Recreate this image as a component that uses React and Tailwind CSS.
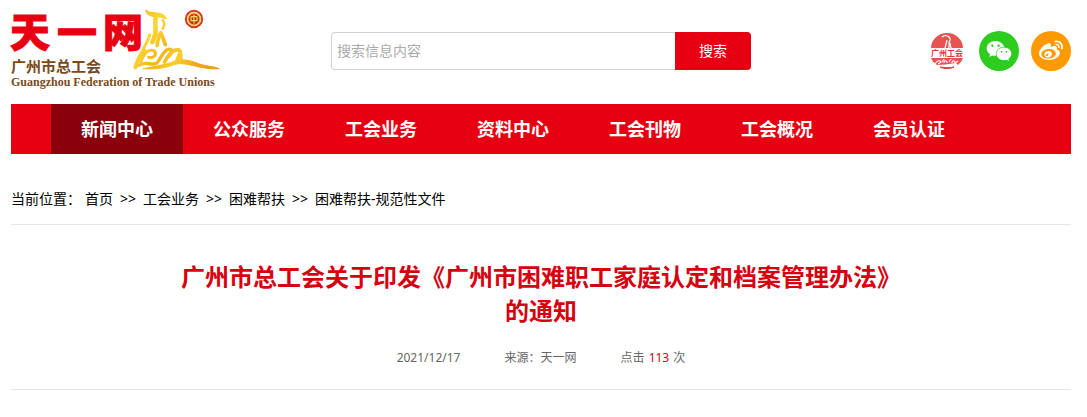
import React from 'react';
import { FaWeixin, FaWeibo } from 'react-icons/fa';

const navItems = ['新闻中心', '公众服务', '工会业务', '资料中心', '工会刊物', '工会概况', '会员认证'];

const crumbs = ['首页', '工会业务', '困难帮扶', '困难帮扶-规范性文件'];

const Logo = () => (
  <svg className="shrink-0 overflow-visible" width="212" height="82" viewBox="0 0 212 82" role="img" aria-label="天一网">
    <defs>
      <linearGradient id="gold" gradientUnits="userSpaceOnUse" x1="400" y1="30" x2="660" y2="210">
        <stop offset="0" stopColor="#f0ac1e" />
        <stop offset="0.25" stopColor="#fbd832" />
        <stop offset="0.45" stopColor="#f3b41f" />
        <stop offset="0.6" stopColor="#f9cf2b" />
        <stop offset="0.8" stopColor="#eea51c" />
        <stop offset="1" stopColor="#e9981c" />
      </linearGradient>
    </defs>
    <text x="-1 46 92" y="37" fontSize="40" fontWeight="900" fill="#e60012" stroke="#e60012" strokeWidth="1" className="font-['Noto_Sans_CJK_SC',sans-serif]">天一网</text>
    <text x="0" y="62" fontSize="15" fontWeight="700" fill="#7a4a1c" className="font-['Noto_Sans_CJK_SC',sans-serif]">广州市总工会</text>
    <text x="0" y="76" fontSize="12" fontWeight="700" fill="#7a4a1c" className="font-['Liberation_Serif',serif]">Guangzhou Federation of Trade Unions</text>
    <g transform="translate(-11 -10) scale(0.3333)" fill="none" stroke="url(#gold)" strokeLinecap="round" strokeLinejoin="round">
      <path d="M438 30c6 10 24 8 38 10c12 2 20 8 22 16c-14-8-28-4-42-8c-10-3-18-10-18-18z" fill="url(#gold)" strokeWidth="4" />
      <path d="M467 56c-4 18 3 32-2 48c-2 10-4 16-8 22" strokeWidth="14" />
      <path d="M488 60c6 8 5 18 0 26" strokeWidth="7" />
      <path d="M478 104c0 10-8 20-6 32M482 98c6 12 8 20 14 36" strokeWidth="11" />
      <path d="M449 104c-4 18-14 32-22 48" strokeWidth="9" />
      <path d="M432 150c-12 14-20 32-26 52" strokeWidth="12" />
      <path d="M422 186c6-14 12-30 24-34c12-4 22 0 20 12c-2 8-12 10-20 8" strokeWidth="9" />
      <path d="M416 196c24-14 38 2 54-6c12-12 18-36 34-42c16-4 12 12 2 22" strokeWidth="10" />
      <path d="M494 186c8-18 24-38 40-36c16 4-2 20-4 36" strokeWidth="11" />
      <path d="M536 148c12 4 6 20 8 32" strokeWidth="8" />
      <path d="M430 206c40-8 70-12 92-22c26-10 52-2 76 8c18 6 38 6 60 14c-26 2-48-2-74-8c-24-6-42-10-62-4c-30 12-62 14-92 12z" fill="url(#gold)" strokeWidth="3" />
    </g>
    <g fill="none" stroke="#d33b1f">
      <circle cx="183" cy="9" r="8.2" strokeWidth="2" />
      <circle cx="183" cy="9" r="6.3" stroke="#f6cf3e" strokeWidth="1.2" />
      <circle cx="183" cy="9" r="5.2" fill="#c8281b" strokeWidth="0.8" />
      <path d="M183 4.5v9M179.8 6.7h6.4M180 6.8v3.8h6V6.8" stroke="#f8dc54" strokeWidth="1.2" />
    </g>
  </svg>
);

const UnionBadge = () => (
  <svg width="36" height="36" viewBox="0 0 36 36" role="img" aria-label="广州工会">
    <path d="M2 15a16 15 0 0 1 32 0z" fill="#e65350" />
    <path d="M13 4c2-2 5-2 7 0c2 2 1 4 0 5v6M18 7l-2 8M21 10l1 5" fill="none" stroke="#fff" strokeWidth="1.2" />
    <text x="18" y="23" textAnchor="middle" fontSize="8" fontWeight="700" fill="#e03936" className="font-['Noto_Sans_CJK_SC',sans-serif]">广州工会</text>
    <path d="M2 25h32c-1 3-3 5-5 7l-2-2c-8 1-14 2-19 2c-3-2-5-4-6-7z" fill="#e65350" />
    <path d="M6 31c2-4 5-4 6-2l-3 2M13 29l2-3M15 30c0-3 3-3 3 0M20 29l2-3M23 30c0-3 3-3 3 0l3-2" fill="none" stroke="#fff" strokeWidth="1.1" />
    <path d="M11 34c5 1 9 1 14 0c-4 2-10 2-14 0z" fill="#d6403d" stroke="#d6403d" />
  </svg>
);

const Header = () => (
  <header className="flex items-center pt-[10px] pb-3">
    <a href="#"><Logo /></a>
    <form className="ml-27 flex w-[420px] h-[38px]" onSubmit={e => e.preventDefault()}>
      <input
        type="text"
        aria-label="搜索信息内容"
        placeholder="搜索信息内容"
        className="min-w-0 flex-1 rounded-l border border-r-0 border-[#d2d2d2] px-[5px] text-sm placeholder:text-[#aaa] outline-none"
      />
      <button type="submit" className="w-19 rounded-r bg-[#e60012] text-sm text-white">搜索</button>
    </form>
    <div className="ml-auto flex items-center gap-3">
      <a href="#" className="mr-[2px]"><UnionBadge /></a>
      <a href="#" aria-label="微信" className="flex size-10 items-center justify-center rounded-full bg-[#2fcc20] text-white">
        <FaWeixin size={26} />
      </a>
      <a href="#" aria-label="微博" className="flex size-10 items-center justify-center rounded-full bg-[#ff9900] text-white">
        <FaWeibo size={24} />
      </a>
    </div>
  </header>
);

const App = () => {
  return (
    <div className="bg-white pr-4 pl-[11px] font-['Noto_Sans','Noto_Sans_CJK_SC',sans-serif] text-black">
      <Header />
      <nav className="flex bg-[#e60012] pl-10">
        {navItems.map((item, i) => (
          <a
            key={item}
            href="#"
            className={`w-33 text-center text-lg leading-[50px] font-bold text-white ${i === 0 ? 'bg-[#8a000b]' : ''}`}
          >
            {item}
          </a>
        ))}
      </nav>
      <div className="flex border-b border-[#e6e6e6] pt-[35px] pb-[15px] text-sm leading-5">
        <span className="mr-1">当前位置：</span>
        <div className="flex gap-[7px]">
          {crumbs.map((crumb, i) => (
            <React.Fragment key={crumb}>
              {i > 0 && <span>&gt;&gt;</span>}
              <a href="#">{crumb}</a>
            </React.Fragment>
          ))}
        </div>
      </div>
      <article className="border-b border-[#e6e6e6] pt-[35px] pb-[21px] text-center">
        <h1 className="mx-auto max-w-[740px] text-2xl leading-[34px] font-bold text-[#d7000f]">
          广州市总工会关于印发《广州市困难职工家庭认定和档案管理办法》的通知
        </h1>
        <div className="mt-5 flex justify-center gap-11 text-xs leading-5 text-[#666]">
          <span>2021/12/17</span>
          <span>来源：天一网</span>
          <span>点击 <span className="mx-px text-[#d7000f]">113</span> 次</span>
        </div>
      </article>
    </div>
  );
}

export default App;
